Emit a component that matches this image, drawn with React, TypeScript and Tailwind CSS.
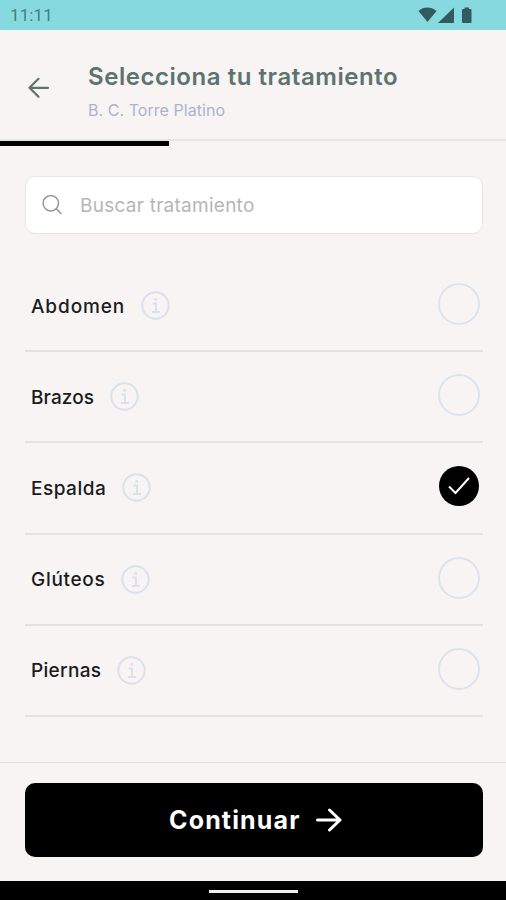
import { useState } from 'react';

interface Treatment {
  name: string;
  labelClass: string;
}

const treatments: Treatment[] = [
  { name: 'Abdomen', labelClass: 'w-[110px] tracking-[0.9px]' },
  { name: 'Brazos', labelClass: 'w-[79px] tracking-[0.1px]' },
  { name: 'Espalda', labelClass: 'w-[91px] tracking-[0.5px]' },
  { name: 'Glúteos', labelClass: 'w-[90px] tracking-[0.7px]' },
  { name: 'Piernas', labelClass: 'w-[86px] tracking-[0.3px]' },
];

function StatusBar() {
  return (
    <div className="flex h-[30px] shrink-0 items-center justify-between bg-[#86dadf] pl-[10px] pr-[33px] text-[#335a5e]">
      <span className="pt-px font-[Roboto] text-[17px] leading-none tracking-[0.1px] text-[#447f84]">11:11</span>
      <svg width="55" height="18" viewBox="0 0 55 18" fill="currentColor">
        <path d="M0.5 5C5.5 0.4 13 0.4 18.5 5L9.5 16Z" />
        <path d="M36 1.5V17H20Z" />
        <path d="M46.5 1.5h4.5v1.5h1.5q1 0 1 1V16q0 1-1 1H45q-1 0-1-1V4q0-1 1-1h1.5Z" />
      </svg>
    </div>
  );
}

function Header() {
  return (
    <header className="flex h-[111px] shrink-0 border-b-2 border-[#e9e5e5] pl-7">
      <button className="mt-[47px] h-[22px] w-[22px] text-[#5c756f]" aria-label="Volver">
        <svg width="22" height="22" viewBox="0 0 22 22" fill="none" stroke="currentColor" strokeWidth="2.2" strokeLinecap="round" strokeLinejoin="round">
          <path d="M20 10.8H1.5M10.5 1.8L1.5 10.8L10.5 19.8" />
        </svg>
      </button>
      <div className="ml-[38px] pt-[31px]">
        <h1 className="whitespace-nowrap text-[24px] font-semibold leading-[32px] tracking-[0.55px] text-[#5c736f]">
          Selecciona tu tratamiento
        </h1>
        <p className="mt-[7px] text-[16px] leading-[20px] tracking-[0.05px] text-[#adb3cb]">B. C. Torre Platino</p>
      </div>
    </header>
  );
}

function SearchField() {
  return (
    <div className="flex h-[58px] items-center rounded-[10px] border-[1.5px] border-[#e8e6e7] bg-white pl-4">
      <svg className="shrink-0" width="22" height="22" viewBox="0 0 22 22" fill="none" stroke="#8f8f91" strokeWidth="1.4" strokeLinecap="round">
        <circle cx="8.8" cy="9.3" r="7.7" />
        <path d="M14.3 14.8L19 19.5" />
      </svg>
      <input
        className="ml-4 w-[380px] bg-transparent pt-[2px] text-[19px] tracking-[0.26px] outline-none placeholder:text-[#b6b6b9]"
        placeholder="Buscar tratamiento"
      />
    </div>
  );
}

function InfoIcon() {
  return (
    <svg className="shrink-0" width="29" height="29" viewBox="0 0 29 29" fill="none" stroke="#dbe1ec" strokeWidth="2">
      <circle cx="14.5" cy="14.5" r="13.2" />
      <path d="M11.5 12.5h3.5v8.3M11 21h8" strokeWidth="2" />
      <circle cx="14.7" cy="8.3" r="1.5" fill="#dbe1ec" stroke="none" />
    </svg>
  );
}

function RadioMark({ checked }: { checked: boolean }) {
  if (!checked) {
    return <span className="h-[42px] w-[42px] rounded-full border-2 border-[#dde3ed]" />;
  }

  return (
    <span className="mr-[1px] flex h-10 w-10 items-center justify-center rounded-full bg-black">
      <svg width="24" height="20" viewBox="0 0 24 20" fill="none" stroke="white" strokeWidth="2">
        <path d="M2 10.5L8.5 17L22 2" />
      </svg>
    </span>
  );
}

export default function App() {
  const [selected, setSelected] = useState('Espalda');

  return (
    <div className="flex h-[900px] w-[506px] flex-col overflow-hidden bg-[#f7f4f3] font-[Inter,sans-serif]">
      <StatusBar />
      <Header />
      <div className="h-[5px] w-[169px] shrink-0 bg-black" />

      <main className="flex flex-1 flex-col pl-[25px] pr-[23px] pt-[30px]">
        <SearchField />
        <ul className="mt-[27px]">
          {treatments.map((item) => (
            <li
              key={item.name}
              className="flex h-[91.2px] items-center border-b-2 border-[#e5e1e1] pl-[6px] pr-[3.5px]"
              onClick={() => setSelected(item.name)}
            >
              <span className={`pt-[2px] text-[19px] font-medium leading-[24px] text-[#1b1b1c] ${item.labelClass}`}>{item.name}</span>
              <InfoIcon />
              <span className="mb-[3px] ml-auto flex">
                <RadioMark checked={selected === item.name} />
              </span>
            </li>
          ))}
        </ul>
      </main>

      <footer className="h-[119px] shrink-0 border-t-[1.5px] border-[#e5e1e1] pl-[25px] pr-[23px] pt-5">
        <button className="flex h-[74px] w-full items-center rounded-[10px] bg-black pl-[144px] text-left text-white">
          <span className="w-[147px] pt-px text-[25px] font-bold tracking-[1.15px]">Continuar</span>
          <svg width="26" height="24" viewBox="0 0 26 24" fill="none" stroke="currentColor" strokeWidth="3" strokeLinecap="round" strokeLinejoin="round">
            <path d="M1.5 12H24M13.5 2L24 12L13.5 22" />
          </svg>
        </button>
      </footer>

      <div className="flex h-[19px] shrink-0 justify-center bg-black pt-[9px]">
        <div className="h-[3px] w-[89px] bg-[#eeeeee]" />
      </div>
    </div>
  );
}
